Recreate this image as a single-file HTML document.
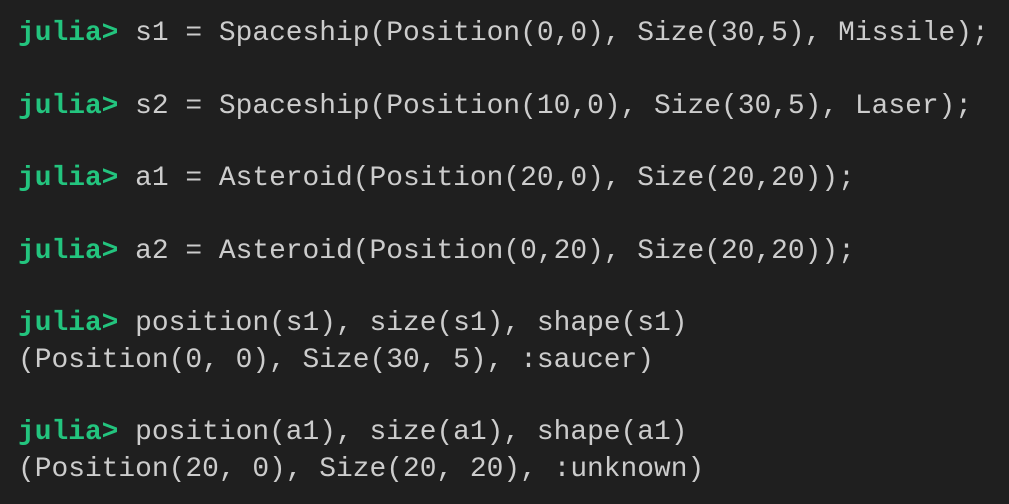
<!DOCTYPE html>
<html><head><meta charset="utf-8"><style>
html,body{margin:0;padding:0;background:#1f1f1f;width:1009px;height:504px;overflow:hidden}
pre{margin:0;position:absolute;left:18px;top:16px;font-family:"Liberation Mono","DejaVu Sans Mono",monospace;font-size:27.9px;line-height:36.3px;color:#cccccc}
b{color:#23c47e;font-weight:bold}
</style></head><body><pre><b>julia&gt;</b> s1 = Spaceship(Position(0,0), Size(30,5), Missile);

<b>julia&gt;</b> s2 = Spaceship(Position(10,0), Size(30,5), Laser);

<b>julia&gt;</b> a1 = Asteroid(Position(20,0), Size(20,20));

<b>julia&gt;</b> a2 = Asteroid(Position(0,20), Size(20,20));

<b>julia&gt;</b> position(s1), size(s1), shape(s1)
(Position(0, 0), Size(30, 5), :saucer)

<b>julia&gt;</b> position(a1), size(a1), shape(a1)
(Position(20, 0), Size(20, 20), :unknown)</pre></body></html>
